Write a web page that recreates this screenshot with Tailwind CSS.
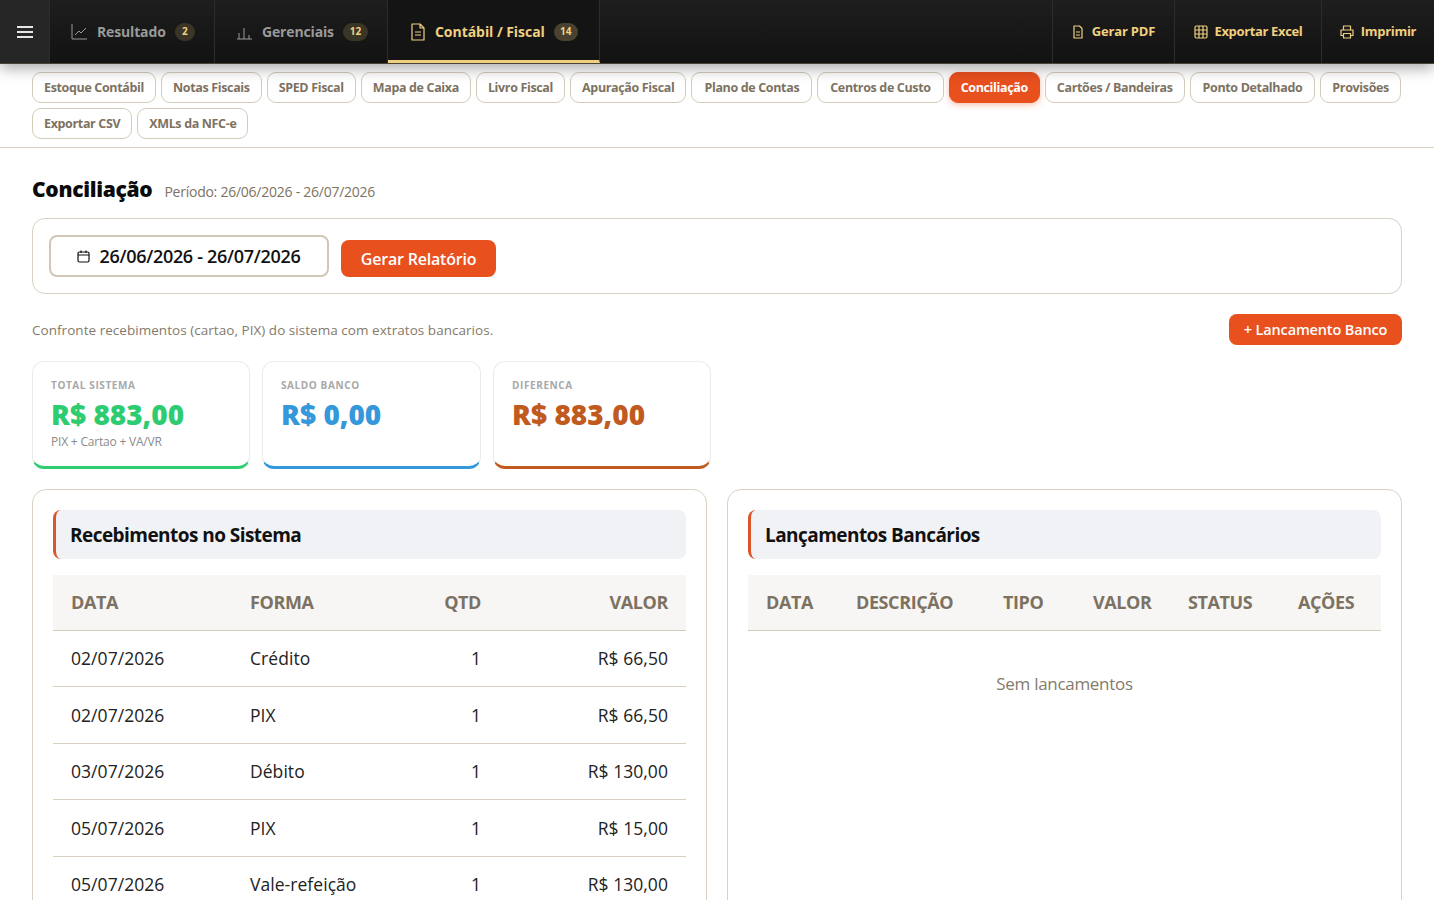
<!DOCTYPE html>
<html lang="pt-BR">
<head>
    <meta charset="UTF-8">
    <title>Conciliação</title>
    <script src="https://cdn.jsdelivr.net/npm/@tailwindcss/browser@4"></script>
</head>
<body class="bg-white overflow-hidden h-[900px] font-['Open_Sans',sans-serif] text-[#111]">
<div class="w-[1434px] h-[900px] overflow-hidden">

    <!-- top nav -->
    <header class="relative z-10 h-[64px] flex bg-gradient-to-b from-[#1e1e1e] to-[#121212] border-b border-[#4a4433] shadow-[0_4px_14px_rgba(0,0,0,0.35)] text-[13px] font-bold">
        <div class="w-[50px] flex items-center justify-center bg-[#262626] border-r border-[#2c2c2c]">
            <svg class="w-[16px] h-[14px] text-[#e6e6e6]" viewBox="0 0 16 14" fill="none" stroke="currentColor" stroke-width="2"><path d="M0 2h16M0 7h16M0 12h16"/></svg>
        </div>
        <div class="w-[165px] flex items-center gap-[9px] pl-[21px] border-r border-[#2c2c2c] text-[#9a9a9a] text-[14px] tracking-[-0.15px]">
            <svg class="w-[17px] h-[17px]" viewBox="0 0 17 17" fill="none" stroke="currentColor" stroke-width="1"><path d="M1 1v15h15M4 12l4-4 2 2 5-5"/></svg>
            <span>Resultado</span>
            <span class="w-[20px] h-[18px] rounded-full bg-[#3a3526] text-[#f0d080] text-[10px] flex items-center justify-center">2</span>
        </div>
        <div class="w-[173px] flex items-center gap-[9px] pl-[21px] border-r border-[#2c2c2c] text-[#9a9a9a] text-[14px] tracking-[-0.15px]">
            <svg class="w-[17px] h-[17px]" viewBox="0 0 17 17" fill="none" stroke="currentColor" stroke-width="1"><path d="M1 16h15M3 16v-6M8 16V5M13 16v-4"/></svg>
            <span>Gerenciais</span>
            <span class="w-[25px] h-[18px] rounded-full bg-[#3a3526] text-[#f0d080] text-[10px] flex items-center justify-center">12</span>
        </div>
        <div class="w-[212px] flex items-center gap-[9px] pl-[22px] pt-[3px] border-r border-[#2c2c2c] border-b-[3px] border-b-[#f0d080] text-[#f0d080] bg-[#141414] text-[14px] tracking-[-0.05px]">
            <svg class="w-[16px] h-[18px]" viewBox="0 0 16 18" fill="none" stroke="currentColor" stroke-width="1.2" stroke-linejoin="round"><path d="M2 1h8l4 4v12H2zM10 1v4h4M5 9h6M5 12h6"/></svg>
            <span>Contábil / Fiscal</span>
            <span class="w-[24px] h-[18px] rounded-full bg-[#4a4230] text-[#f0d080] text-[10px] flex items-center justify-center">14</span>
        </div>
        <div class="flex-1 border-r border-[#2c2c2c]"></div>
        <div class="w-[122px] flex items-center justify-center gap-[8px] border-r border-[#2c2c2c] text-[#f0d080] tracking-[-0.2px]">
            <svg class="w-[12px] h-[14px]" viewBox="0 0 12 14" fill="none" stroke="currentColor" stroke-width="1.2" stroke-linejoin="round"><path d="M2 1h5.5L10 3.5V13H2zM4 7h4M4 10h4"/></svg>
            <span>Gerar PDF</span>
        </div>
        <div class="w-[147px] flex items-center justify-center gap-[7px] border-r border-[#2c2c2c] text-[#f0d080] tracking-[-0.35px]">
            <svg class="w-[14px] h-[14px]" viewBox="0 0 14 14" fill="none" stroke="currentColor" stroke-width="1.2"><rect x="1" y="1" width="12" height="12" rx="1.5"/><path d="M1 5h12M1 9h12M5 1v12M9 1v12"/></svg>
            <span>Exportar Excel</span>
        </div>
        <div class="w-[112px] flex items-center justify-center gap-[7px] text-[#f0d080] tracking-[-0.3px]">
            <svg class="w-[14px] h-[14px]" viewBox="0 0 14 14" fill="none" stroke="currentColor" stroke-width="1.2" stroke-linejoin="round"><path d="M3.5 5V1h7v4M3.5 10.5H1V5h12v5.5h-2.5M3.5 8.5h7V13h-7z"/></svg>
            <span>Imprimir</span>
        </div>
    </header>

    <!-- sub tabs -->
    <nav class="h-[84px] border-b border-[#d9d2c2] pt-[8px] pl-[32px] pr-[30px] flex flex-wrap content-start gap-x-[5px] gap-y-[5px] text-[12.5px] font-bold tracking-[-0.35px] text-[#7d7262]">
        <a class="h-[31px] px-[11px] pt-[1px] flex items-center rounded-[9px] border border-[#d4ccba]">Estoque Contábil</a>
        <a class="h-[31px] px-[11px] pt-[1px] flex items-center rounded-[9px] border border-[#d4ccba]">Notas Fiscais</a>
        <a class="h-[31px] px-[11px] pt-[1px] flex items-center rounded-[9px] border border-[#d4ccba]">SPED Fiscal</a>
        <a class="h-[31px] px-[11px] pt-[1px] flex items-center rounded-[9px] border border-[#d4ccba]">Mapa de Caixa</a>
        <a class="h-[31px] px-[11px] pt-[1px] flex items-center rounded-[9px] border border-[#d4ccba]">Livro Fiscal</a>
        <a class="h-[31px] px-[11px] pt-[1px] flex items-center rounded-[9px] border border-[#d4ccba]">Apuração Fiscal</a>
        <a class="h-[31px] px-[12px] pt-[1px] flex items-center rounded-[9px] border border-[#d4ccba]">Plano de Contas</a>
        <a class="h-[31px] px-[12px] pt-[1px] flex items-center rounded-[9px] border border-[#d4ccba]">Centros de Custo</a>
        <a class="h-[31px] px-[11px] pt-[1px] flex items-center rounded-[9px] border border-[#e8501e] bg-[#e8501e] text-white shadow-[0_2px_6px_rgba(232,80,30,0.35)]">Conciliação</a>
        <a class="h-[31px] px-[11px] pt-[1px] flex items-center rounded-[9px] border border-[#d4ccba]">Cartões / Bandeiras</a>
        <a class="h-[31px] px-[12px] pt-[1px] flex items-center rounded-[9px] border border-[#d4ccba]">Ponto Detalhado</a>
        <a class="h-[31px] px-[11px] pt-[1px] flex items-center rounded-[9px] border border-[#d4ccba]">Provisões</a>
        <a class="h-[31px] px-[11px] pt-[1px] flex items-center rounded-[9px] border border-[#d4ccba]">Exportar CSV</a>
        <a class="h-[31px] px-[11px] pt-[1px] flex items-center rounded-[9px] border border-[#d4ccba]">XMLs da NFC-e</a>
    </nav>

    <main class="px-[32px] pt-[26px]">
        <div class="flex items-baseline gap-[12px] h-[28px]">
            <h1 class="text-[21px] font-extrabold tracking-[-0.3px] text-[#0a0a0a]">Conciliação</h1>
            <span class="text-[14px] tracking-[-0.25px] text-[#7d7262]">Período: 26/06/2026 - 26/07/2026</span>
        </div>

        <div class="mt-[16px] h-[76px] rounded-[13px] border border-[#d9d2c2] pl-[16px] pt-[16px] flex items-start gap-[12px]">
            <div class="w-[280px] h-[42px] rounded-[8px] border-2 border-[#d0c8b5] flex items-center justify-center gap-[9px] text-[18px] font-semibold tracking-[-0.3px] text-[#111]">
                <svg class="w-[13px] h-[13px]" viewBox="0 0 13 13" fill="none" stroke="currentColor" stroke-width="1.2"><rect x="1" y="2" width="11" height="10" rx="1.5"/><path d="M1 5h11M4 0.5V3M9 0.5V3"/></svg>
                <span>26/06/2026 - 26/07/2026</span>
            </div>
            <button class="mt-[5px] w-[155px] h-[37px] rounded-[8px] bg-[#e8501e] text-white text-[16px] font-semibold tracking-[-0.2px]">Gerar Relatório</button>
        </div>

        <div class="mt-[20px] h-[31px] flex items-center justify-between">
            <p class="pt-[1px] text-[13.5px] tracking-[0.04px] text-[#857a6a]">Confronte recebimentos (cartao, PIX) do sistema com extratos bancarios.</p>
            <button class="w-[173px] h-[31px] rounded-[8px] bg-[#e8501e] text-white text-[14.5px] font-semibold tracking-[-0.15px]">+ Lancamento Banco</button>
        </div>

        <!-- cards -->
        <div class="mt-[16px] flex gap-[12px]">
            <div class="w-[218px] h-[108px] rounded-[12px] border border-[#ebebeb] border-b-[3px] border-b-[#2ecc71] pl-[18px] pt-[16px]">
                <div class="text-[10px] font-bold tracking-[0.6px] text-[#a8a8a8] leading-[14px]">TOTAL SISTEMA</div>
                <div class="mt-[6px] text-[28px] font-extrabold leading-[32px] text-[#2ecc71]">R$ 883,00</div>
                <div class="mt-[3px] text-[12px] tracking-[-0.2px] text-[#8a8a8a] leading-[18px]">PIX + Cartao + VA/VR</div>
            </div>
            <div class="w-[219px] h-[108px] rounded-[12px] border border-[#ebebeb] border-b-[3px] border-b-[#3498db] pl-[18px] pt-[16px]">
                <div class="text-[10px] font-bold tracking-[0.6px] text-[#a8a8a8] leading-[14px]">SALDO BANCO</div>
                <div class="mt-[6px] text-[28px] font-extrabold leading-[32px] text-[#3498db]">R$ 0,00</div>
            </div>
            <div class="w-[218px] h-[108px] rounded-[12px] border border-[#ebebeb] border-b-[3px] border-b-[#c05a1e] pl-[18px] pt-[16px]">
                <div class="text-[10px] font-bold tracking-[0.6px] text-[#a8a8a8] leading-[14px]">DIFERENCA</div>
                <div class="mt-[6px] text-[28px] font-extrabold leading-[32px] text-[#c05a1e]">R$ 883,00</div>
            </div>
        </div>

        <!-- panels -->
        <div class="mt-[20px] flex gap-[20px]">
            <section class="w-[675px] h-[500px] rounded-[14px] border border-[#d9d2c2] p-[20px]">
                <h2 class="h-[49px] flex items-center pl-[14px] pt-[2px] rounded-[8px] bg-[#f1f2f5] border-l-[3px] border-[#d9562b] text-[19px] font-bold tracking-[-0.55px] text-[#111]">Recebimentos no Sistema</h2>
                <table class="mt-[16px] w-[633px] table-fixed text-[17.5px] tracking-[0.05px] text-[#222]">
                    <thead>
                        <tr class="h-[55px] bg-[#f7f6f5] border-b border-[#d4ccba] text-[#7d7262] text-[18px] tracking-[-0.4px]">
                            <th class="w-[179px] pl-[18px] text-left font-bold">DATA</th>
                            <th class="w-[194px] pl-[18px] text-left font-bold">FORMA</th>
                            <th class="w-[55px] text-right font-bold">QTD</th>
                            <th class="pr-[18px] text-right font-bold">VALOR</th>
                        </tr>
                    </thead>
                    <tbody>
                        <tr class="h-[56.5px] border-b border-[#d9d2c2]"><td class="pl-[18px]">02/07/2026</td><td class="pl-[18px]">Crédito</td><td class="text-right">1</td><td class="pr-[18px] text-right">R$ 66,50</td></tr>
                        <tr class="h-[56.5px] border-b border-[#d9d2c2]"><td class="pl-[18px]">02/07/2026</td><td class="pl-[18px]">PIX</td><td class="text-right">1</td><td class="pr-[18px] text-right">R$ 66,50</td></tr>
                        <tr class="h-[56.5px] border-b border-[#d9d2c2]"><td class="pl-[18px]">03/07/2026</td><td class="pl-[18px]">Débito</td><td class="text-right">1</td><td class="pr-[18px] text-right">R$ 130,00</td></tr>
                        <tr class="h-[56.5px] border-b border-[#d9d2c2]"><td class="pl-[18px]">05/07/2026</td><td class="pl-[18px]">PIX</td><td class="text-right">1</td><td class="pr-[18px] text-right">R$ 15,00</td></tr>
                        <tr class="h-[56.5px] border-b border-[#d9d2c2]"><td class="pl-[18px]">05/07/2026</td><td class="pl-[18px]">Vale-refeição</td><td class="text-right">1</td><td class="pr-[18px] text-right">R$ 130,00</td></tr>
                    </tbody>
                </table>
            </section>
            <section class="w-[675px] h-[500px] rounded-[14px] border border-[#d9d2c2] p-[20px]">
                <h2 class="h-[49px] flex items-center pl-[14px] pt-[2px] rounded-[8px] bg-[#f1f2f5] border-l-[3px] border-[#d9562b] text-[19px] font-bold tracking-[-0.55px] text-[#111]">Lançamentos Bancários</h2>
                <table class="mt-[16px] w-[633px] table-fixed text-[17.5px] text-[#222]">
                    <thead>
                        <tr class="h-[55px] bg-[#f7f6f5] border-b border-[#d4ccba] text-[#7d7262] text-[18px] tracking-[-0.4px]">
                            <th class="w-[90px] pl-[18px] text-left font-bold">DATA</th>
                            <th class="w-[147px] pl-[18px] text-left font-bold">DESCRIÇÃO</th>
                            <th class="w-[90px] pl-[18px] text-left font-bold">TIPO</th>
                            <th class="w-[95px] pl-[18px] text-left font-bold">VALOR</th>
                            <th class="w-[110px] pl-[18px] text-left font-bold">STATUS</th>
                            <th class="pl-[18px] text-left font-bold">AÇÕES</th>
                        </tr>
                    </thead>
                    <tbody>
                        <tr><td colspan="6" class="h-[107px] text-center text-[17px] tracking-[-0.3px] text-[#857a6a]">Sem lancamentos</td></tr>
                    </tbody>
                </table>
            </section>
        </div>
    </main>
</div>
</body>
</html>
